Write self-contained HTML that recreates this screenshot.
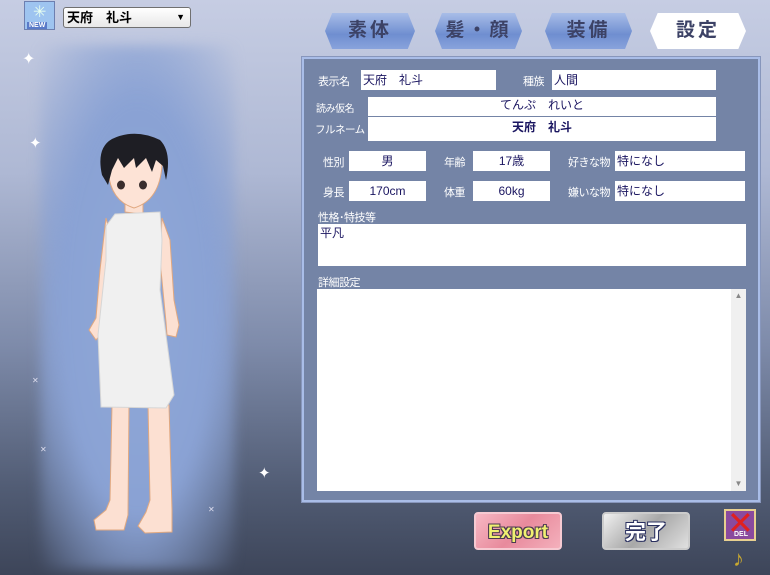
<!DOCTYPE html>
<html><head><meta charset="utf-8"><style>
*{margin:0;padding:0;box-sizing:border-box}
body{width:770px;height:575px;overflow:hidden;position:relative;font-family:"Liberation Sans","Noto Sans CJK JP",sans-serif;font-size:12px;
background:linear-gradient(180deg,#c6cde3 0%,#aeb8d4 30%,#7e8baa 60%,#515c74 85%,#3d4559 100%)}
.abs{position:absolute}
.glow{left:40px;top:45px;width:195px;height:525px;background:radial-gradient(ellipse at 50% 50%,#8fa8d8 0%,#8aa2d4 55%,rgba(138,160,210,0) 100%);filter:blur(6px)}
.panel{left:302px;top:57px;width:458px;height:445px;background:#7484a6;border:2px solid #a9bde8;box-shadow:0 0 0 1px #8796bc}
.lbl{position:absolute;color:#fff;font-size:11px;white-space:nowrap;letter-spacing:-0.5px}
.in{position:absolute;background:#fff;color:#1a1560;font-size:12px;line-height:20px;padding-left:2px;white-space:nowrap}
.c{text-align:center;padding:0}
.tab{position:absolute;top:13px;height:36px;font-size:19px;font-weight:bold;color:#3c4266;text-align:center;line-height:36px;letter-spacing:3px;
background:linear-gradient(180deg,#a8bde8,#6f8ed0 60%,#89a3dc);clip-path:polygon(8% 0,92% 0,100% 50%,92% 100%,8% 100%,0 50%);}
.btn{position:absolute;top:512px;height:38px;width:88px;border-radius:4px;font-weight:bold;text-align:center;line-height:38px}
</style></head><body>
<div class="abs glow"></div>
<div class="abs" style="left:24px;top:1px;width:31px;height:29px;background:#9ec4f0;border:1px solid #6d7fb0">
<div class="abs" style="left:8px;top:3px;color:#e8fff0;font-size:16px;line-height:16px">✳</div>
<div class="abs" style="left:2px;top:20px;font-size:7px;font-weight:bold;color:#fff;background:#5a7ac8;padding:0 2px">NEW</div></div>
<div class="abs" style="left:63px;top:7px;width:128px;height:21px;background:linear-gradient(#fff,#e8e8e8);border:1px solid #707070;border-radius:3px;font-weight:bold;font-size:13px;line-height:19px;padding-left:3px">天府　礼斗<span class="abs" style="right:5px;top:0;font-size:9px">▼</span></div>
<div class="abs" style="left:22px;top:49px;color:#fff;font-size:16px">✦</div>
<div class="abs" style="left:29px;top:134px;color:#fff;font-size:15px">✦</div>
<div class="abs" style="left:258px;top:464px;color:#fff;font-size:15px">✦</div>
<div class="abs" style="left:32px;top:376px;color:#dde;font-size:8px">✕</div>
<div class="abs" style="left:40px;top:445px;color:#dde;font-size:8px">✕</div>
<div class="abs" style="left:208px;top:505px;color:#dde;font-size:8px">✕</div>
<svg class="abs" style="left:0;top:0" width="300" height="575">
<g stroke="#e0a880" stroke-width="1">
<path d="M106 218 L100 270 L96 318 L89 330 L96 340 L103 332 L105 300 L112 240Z" fill="#fce0d2"/>
<path d="M162 218 L170 240 L174 300 L179 325 L176 337 L167 335 L166 322 L160 260Z" fill="#fce0d2"/>
<path d="M112 405 L110 500 L106 510 L94 520 L96 530 L124 530 L128 515 L129 405Z" fill="#fce0d2"/>
<path d="M148 405 L150 500 L146 512 L138 526 L145 533 L172 532 L172 510 L169 405Z" fill="#fce0d2"/>
<path d="M125 195 L125 212 L143 214 L143 195Z" fill="#fce0d2"/>
<path d="M108 165 Q108 200 134 208 Q160 200 162 165 L155 150 L112 150Z" fill="#fde3d6"/>
</g>
<path d="M115 214 L160 212 L162 240 L160 290 L174 395 L166 408 L101 407 L98 335 L106 260 L106 226Z" fill="#f0f0f0" stroke="#d6d6d6"/>
<path d="M102 175 Q96 148 112 139 Q135 128 160 140 Q172 152 166 180 L163 166 L156 160 L152 172 L146 158 L136 168 L134 158 L124 168 L118 158 L112 170 L108 185Z" fill="#1e1e24"/>
<ellipse cx="121" cy="185" rx="4" ry="4.5" fill="#3a2e2e"/><ellipse cx="143" cy="185" rx="4" ry="4.5" fill="#3a2e2e"/>
</svg>
<div class="tab" style="left:325px;width:90px">素体</div>
<div class="tab" style="left:435px;width:87px">髪・顔</div>
<div class="tab" style="left:545px;width:87px">装備</div>
<div class="tab" style="left:650px;width:96px;background:#fff">設定</div>
<div class="abs panel"></div>
<div class="lbl" style="left:318px;top:73px">表示名</div><div class="in" style="left:361px;top:70px;width:135px">天府　礼斗</div>
<div class="lbl" style="left:523px;top:73px">種族</div><div class="in" style="left:552px;top:70px;width:164px">人間</div>
<div class="lbl" style="left:316px;top:100px;font-size:10px">読み仮名</div><div class="in c" style="left:368px;top:97px;width:348px;height:19px;line-height:17px">てんぷ　れいと</div>
<div class="lbl" style="left:315px;top:122px;font-size:10.5px">フルネーム</div><div class="in c" style="left:368px;top:117px;width:348px;height:24px;font-weight:bold">天府　礼斗</div>
<div class="lbl" style="left:323px;top:154px">性別</div><div class="in c" style="left:349px;top:151px;width:77px">男</div>
<div class="lbl" style="left:444px;top:154px">年齢</div><div class="in c" style="left:473px;top:151px;width:77px">17歳</div>
<div class="lbl" style="left:568px;top:154px">好きな物</div><div class="in" style="left:615px;top:151px;width:130px">特になし</div>
<div class="lbl" style="left:323px;top:184px">身長</div><div class="in c" style="left:349px;top:181px;width:77px">170cm</div>
<div class="lbl" style="left:444px;top:184px">体重</div><div class="in c" style="left:473px;top:181px;width:77px">60kg</div>
<div class="lbl" style="left:568px;top:184px">嫌いな物</div><div class="in" style="left:615px;top:181px;width:130px">特になし</div>
<div class="lbl" style="left:318px;top:209px">性格･特技等</div>
<div class="in" style="left:318px;top:224px;width:428px;height:42px;line-height:18px">平凡</div>
<div class="lbl" style="left:318px;top:274px">詳細設定</div>
<div class="in" style="left:317px;top:289px;width:429px;height:202px"></div>
<div class="abs" style="left:731px;top:289px;width:15px;height:202px;background:#f0f0f0;color:#888;font-size:8px;text-align:center;line-height:14px">▲<div style="position:absolute;bottom:0;width:15px">▼</div></div>
<div class="btn" style="left:474px;background:linear-gradient(135deg,#f7b8c4,#e88a9c 50%,#f4b0bc);border:2px solid #f6cad2;font-size:19px;color:#f0f070;text-shadow:1px 1px 0 #4a3a50,-1px -1px 0 #4a3a50,1px -1px 0 #4a3a50,-1px 1px 0 #4a3a50">Export</div>
<div class="btn" style="left:602px;background:linear-gradient(135deg,#f0f0f0,#a8a8a8 50%,#e0e0e0);border:2px solid #ccc;font-size:21px;color:#fff;text-shadow:1px 1px 0 #2a3060,-1px -1px 0 #2a3060,1px -1px 0 #2a3060,-1px 1px 0 #2a3060">完了</div>
<div class="abs" style="left:724px;top:509px;width:32px;height:32px;background:#8a4a9e;border:2px solid #e8d090">
<div class="abs" style="left:1px;top:-8px;color:#e02020;font-size:32px;line-height:40px">✕</div>
<div class="abs" style="left:8px;top:20px;font-size:7px;color:#fff;font-weight:bold">DEL</div></div>
<div class="abs" style="left:733px;top:546px;font-size:22px;color:#c8a830">♪</div>
</body></html>
